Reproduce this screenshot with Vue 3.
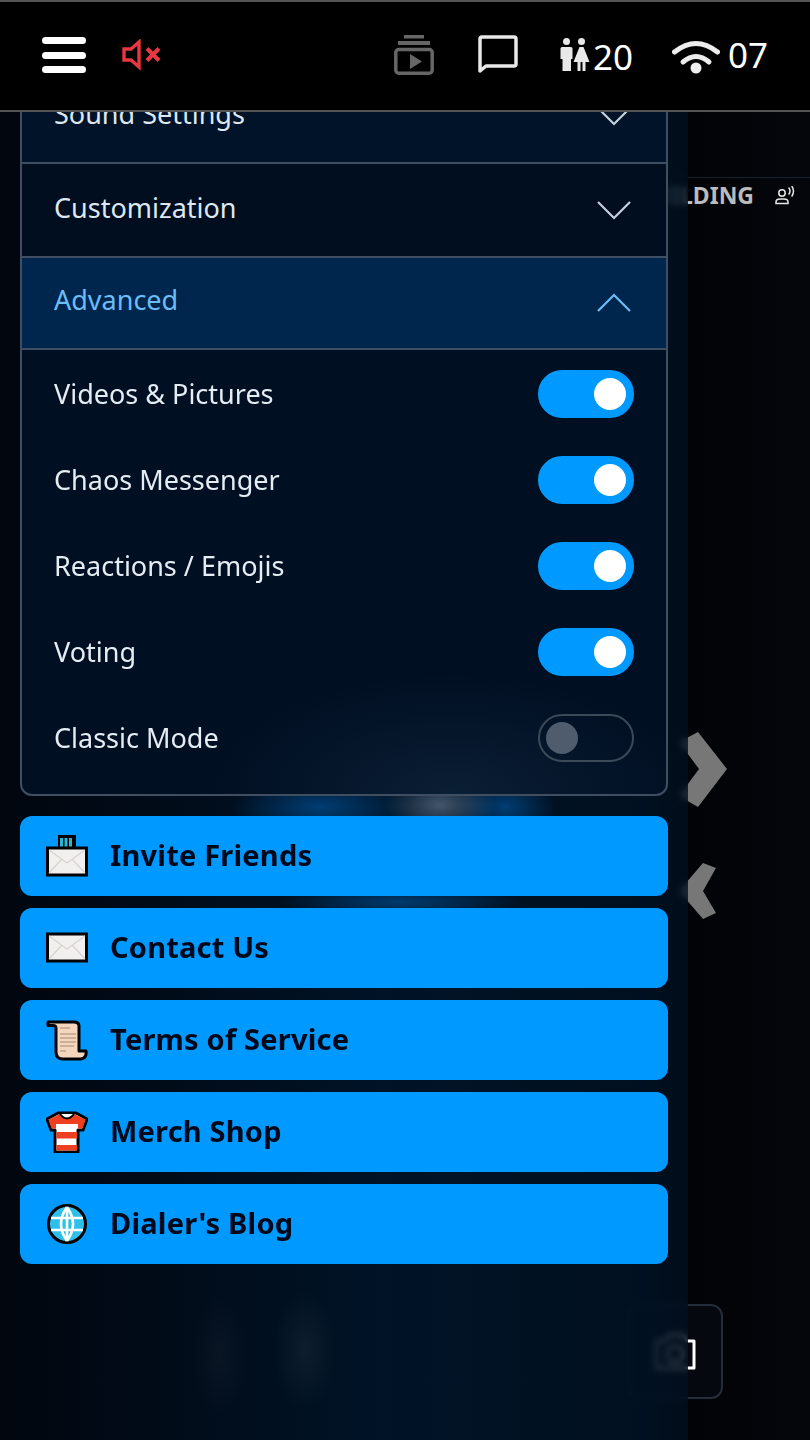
<template>
  <div class="app">
    <header class="topbar">
      <div class="burger"><span></span><span></span><span></span></div>
      <svg class="mute" width="40" height="32" viewBox="0 0 40 32" fill="none" stroke="#e8373f">
        <path d="M2 10H9L17 3V28L9 21H2Z" stroke-width="3.4" />
        <path d="M25 9.500L37 21.500M37 9.500L25 21.500" stroke-width="4" />
      </svg>
      <svg class="stack" width="40" height="40" viewBox="0 0 40 40" fill="#666">
        <rect x="10" width="20" height="3.500" />
        <rect x="4" y="6" width="32" height="4" />
        <rect x="1.800" y="14.500" width="36.400" height="23.700" rx="3" fill="none" stroke="#666" stroke-width="3.500" />
        <path d="M16 19V34L28 26.500Z" />
      </svg>
      <svg class="chat" width="40" height="40" viewBox="0 0 40 40" fill="none">
        <path d="M2 36V4Q2 2 4 2H36Q38 2 38 4V29Q38 31 36 31H8Z" stroke="#e8e8e8" stroke-width="3.500" stroke-linejoin="round" />
      </svg>
      <svg class="people" width="30" height="34" viewBox="0 0 30 34" fill="#e8e8e8">
        <circle cx="6.500" cy="3.500" r="3.500" />
        <circle cx="21.500" cy="3.500" r="3.500" />
        <path d="M2 9H11Q12.500 9 12.500 10.500V21H11V33H2.500V21H0.500V10.500Q0.500 9 2 9Z" />
        <path d="M19.500 9H23.500L29.500 24H25.500V33H22.500V24H20.500V33H17.500V24H13.500Z" />
      </svg>
      <span class="count">20</span>
      <svg class="wifi" width="48" height="34" viewBox="0 0 48 34" fill="none" stroke="#eee" stroke-width="5" stroke-linecap="round">
        <path d="M2.500 12Q24 -5 45.500 12" />
        <path d="M11 22Q24 11 37 22" />
        <circle cx="24" cy="28" r="5.500" fill="#eee" stroke="none" />
      </svg>
      <span class="count count-right">07</span>
    </header>

    <main class="stage">
      <div class="title-bar">
        <span class="title">BUILDING</span>
        <svg width="21" height="20" viewBox="0 0 21 20" fill="none" stroke="#e8e8e8" stroke-width="1.500">
          <circle cx="7" cy="7" r="3.200" />
          <path d="M1 17.500V16Q1 13 5 13H9Q13 13 13 16V17.500Z" />
          <path d="M14 2Q16 5 14 8M17 0.500Q20 5 17 10" stroke-linecap="round" />
        </svg>
      </div>

      <svg class="arrow arrow-next" width="62" height="80" viewBox="0 0 62 80" fill="#777">
        <path d="M33 0L62 37L33 75L14 64L34 37L14 10Z" />
      </svg>
      <svg class="arrow arrow-prev" width="50" height="60" viewBox="0 0 50 60" fill="#777">
        <path d="M32 0L45 5L32 28L45 50L32 56L8 28Z" />
      </svg>

      <button class="camera">
        <svg width="44" height="38" viewBox="0 0 44 38" fill="none" stroke="#fff" stroke-width="3">
          <path d="M3 8H12L16 2H30L34 8H41V35H3Z" stroke-linejoin="round" />
          <circle cx="22" cy="21" r="8" />
        </svg>
      </button>
    </main>

    <aside class="drawer">
      <section class="settings">
        <div v-for="item in closedSections" :key="item" class="section-head">
          <span>{{ item }}</span>
          <svg width="36" height="20" viewBox="0 0 36 20" fill="none" stroke="#c4d0de" stroke-width="2.200">
            <path d="M2 2L18 18L34 2" />
          </svg>
        </div>
        <div class="section-head section-open">
          <span>Advanced</span>
          <svg width="36" height="20" viewBox="0 0 36 20" fill="none" stroke="#6cbcf5" stroke-width="2.200">
            <path d="M2 18L18 2L34 18" />
          </svg>
        </div>
        <div class="options">
          <div v-for="opt in options" :key="opt.label" class="option">
            <span>{{ opt.label }}</span>
            <div class="toggle" :class="{ on: opt.on }"><i></i></div>
          </div>
        </div>
      </section>

      <nav class="links">
        <a class="link">
          <svg class="link-icon" width="42" height="42" viewBox="0 0 42 42">
            <rect x="12" y="0" width="18" height="15" fill="#000" />
            <path d="M15.500 3V14M20 3V14M24.500 3V14" stroke="#27b6d6" stroke-width="3" />
            <rect x="1.500" y="13" width="39" height="27" fill="#f1f0ee" stroke="#000" stroke-width="3" />
            <path d="M3 15L21 28L39 15M3 38L16 24M39 38L26 24" fill="none" stroke="#d8d4ce" stroke-width="1.300" />
          </svg>
          <span>Invite Friends</span>
        </a>
        <a class="link">
          <svg class="link-icon" width="42" height="42" viewBox="0 0 42 42">
            <rect x="1.500" y="7" width="39" height="27" fill="#f1f0ee" stroke="#000" stroke-width="3" />
            <path d="M3 9L21 22L39 9M3 32L16 18M39 32L26 18" fill="none" stroke="#d8d4ce" stroke-width="1.300" />
          </svg>
          <span>Contact Us</span>
        </a>
        <a class="link">
          <svg class="link-icon" width="42" height="42" viewBox="0 0 42 42">
            <path d="M2 3H28Q33 3 33 7V32H40Q41 39 35 40H17Q10 40 10 33V9Q10 6.500 7 6.500H2Z" fill="#f4d6bd" stroke="#000" stroke-width="3" stroke-linejoin="round" />
            <path d="M14 9H24M14 15H30M14 19H30M14 23H30M14 27H28M14 32H20" stroke="#c0a48e" stroke-width="1.500" />
          </svg>
          <span>Terms of Service</span>
        </a>
        <a class="link">
          <svg class="link-icon" width="42" height="42" viewBox="0 0 42 42">
            <path d="M12 2H30L41 8L37 19H32V41H9V19H5L1 8Z" fill="#fff" stroke="#000" stroke-width="3" stroke-linejoin="round" />
            <path d="M13 3.500H29L39.500 8.500L36.500 17.500H32V13H10V17.500H5.500L2.500 8.500Z M10.500 21H31V27.500H10.500Z" fill="#ee4020" />
            <path d="M10.500 34H31V39.500H10.500Z" fill="#ee4020" />
            <path d="M14 3Q21 12 28 3" fill="#fff" stroke="#000" stroke-width="2" />
          </svg>
          <span>Merch Shop</span>
        </a>
        <a class="link">
          <svg class="link-icon" width="42" height="42" viewBox="0 0 42 42" fill="none">
            <circle cx="21" cy="21" r="18.500" fill="#2cc0ea" stroke="#000" stroke-width="3" />
            <path d="M21 4V38M5 15H37M5 27H37M21 4Q9 21 21 38M21 4Q33 21 21 38" stroke="#fff" stroke-width="2.600" />
          </svg>
          <span>Dialer's Blog</span>
        </a>
      </nav>
    </aside>
  </div>
</template>

<script setup>
const closedSections = ['Sound Settings', 'Customization']

const options = [
  { label: 'Videos & Pictures', on: true },
  { label: 'Chaos Messenger', on: true },
  { label: 'Reactions / Emojis', on: true },
  { label: 'Voting', on: true },
  { label: 'Classic Mode', on: false }
]
</script>

<style>
body {
  background: #000;
}
</style>

<style scoped>
.app {
  position: relative;
  width: 810px;
  height: 1440px;
  overflow: hidden;
  display: flex;
  flex-direction: column;
  background: #000;
  font-family: "Noto Sans", sans-serif;
}

.topbar {
  position: relative;
  z-index: 3;
  flex: none;
  height: 112px;
  box-sizing: border-box;
  display: flex;
  align-items: center;
  padding: 0 0 2px 42px;
  background: #000;
  border-top: 2px solid #555;
  border-bottom: 2px solid #555;
}

.burger {
  width: 44px;
  display: flex;
  flex-direction: column;
  gap: 7.5px;
}

.burger span {
  height: 7px;
  border-radius: 4px;
  background: #fff;
}

.mute {
  margin-left: 36px;
}

.stack {
  margin-left: 232px;
}

.chat {
  margin-left: 44px;
}

.people {
  margin-left: 42px;
}

.count {
  margin-left: 3px;
  color: #fff;
  font-size: 35px;
  line-height: 1;
  margin-top: 3px;
}

.wifi {
  margin-left: 39px;
  margin-top: 3px;
}

.count-right {
  margin-left: 8px;
  margin-top: -2px;
}

.stage {
  position: relative;
  flex: 1;
  background: linear-gradient(90deg, #000 70%, #04060c 100%);
}

.title-bar {
  margin-top: 65px;
  height: 36px;
  display: flex;
  align-items: center;
  justify-content: flex-end;
  gap: 21px;
  padding-right: 14px;
  border-top: 1px solid #1c222b;
}

.title {
  color: #bbb;
  font-size: 23px;
  font-weight: 700;
  line-height: 32px;
  margin-top: -3px;
}

.arrow {
  position: absolute;
}

.arrow-next {
  left: 665px;
  top: 620px;
}

.arrow-prev {
  left: 671px;
  top: 751px;
}

.camera {
  position: absolute;
  left: 627px;
  top: 1192px;
  width: 96px;
  height: 95px;
  box-sizing: border-box;
  display: flex;
  align-items: center;
  justify-content: center;
  padding: 0;
  background: #05080f;
  border: 2px solid #252d38;
  border-radius: 12px;
}

.drawer {
  position: absolute;
  z-index: 2;
  left: 0;
  top: 110px;
  bottom: 0;
  width: 688px;
  box-sizing: border-box;
  overflow: hidden;
  padding: 0 20px;
  background:
    radial-gradient(55px 30px at 440px 695px, rgba(120, 140, 165, 0.55), transparent),
    radial-gradient(90px 30px at 320px 697px, rgba(0, 80, 150, 0.7), transparent),
    radial-gradient(50px 30px at 505px 697px, rgba(0, 80, 150, 0.7), transparent),
    radial-gradient(120px 16px at 400px 792px, rgba(0, 80, 150, 0.65), transparent),
    radial-gradient(32px 60px at 305px 1240px, rgba(70, 80, 90, 0.2), transparent),
    radial-gradient(28px 60px at 220px 1245px, rgba(70, 80, 90, 0.12), transparent),
    linear-gradient(90deg, rgba(1, 6, 15, 0.96), rgba(0, 20, 40, 0.96) 55%, rgba(1, 18, 36, 0.9) 93%, rgba(1, 16, 32, 0.78));
  backdrop-filter: blur(3px);
}

.settings {
  margin-top: -42px;
  border: 2px solid #3f4e60;
  border-radius: 0 0 12px 12px;
  background: radial-gradient(240px 120px at 430px 100%, #0a1e34, transparent), #010f22;
}

.section-head {
  height: 92px;
  display: flex;
  align-items: center;
  justify-content: space-between;
  padding: 0 34px 0 32px;
  border-bottom: 2px solid #3f4e60;
  color: #dfe7f0;
  font-size: 27px;
  background: #011328;
}

.section-head span {
  margin-top: -6px;
}

.section-head:nth-child(2) {
  background: #010e20;
}

.section-open {
  height: 90px;
  color: #6cbcf5;
  background: #01264e;
}

.section-open span {
  margin-top: -8px;
}

.options {
  padding: 20px 32px 32px;
  display: flex;
  flex-direction: column;
  gap: 38px;
}

.option {
  display: flex;
  align-items: center;
  justify-content: space-between;
  color: #e6ecf3;
  font-size: 27px;
}

.option span {
  margin-top: -2px;
}

.toggle {
  position: relative;
  width: 96px;
  height: 48px;
  box-sizing: border-box;
  border: 2px solid #3b4959;
  border-radius: 24px;
}

.toggle i {
  position: absolute;
  left: 6px;
  top: 6px;
  width: 32px;
  height: 32px;
  border-radius: 50%;
  background: #4e5c6d;
}

.toggle.on {
  background: #0099ff;
  border-color: #0099ff;
}

.toggle.on i {
  left: 54px;
  background: #fff;
}

.links {
  margin-top: 20px;
  display: flex;
  flex-direction: column;
  gap: 12px;
}

.link {
  height: 80px;
  display: flex;
  align-items: center;
  gap: 22px;
  padding-left: 26px;
  border-radius: 12px;
  background: #0099ff;
  color: #00091a;
  font-size: 29px;
  font-weight: 700;
  letter-spacing: 0.2px;
}

.link span {
  margin-top: -4px;
}

.link-icon {
  flex: none;
}
</style>
